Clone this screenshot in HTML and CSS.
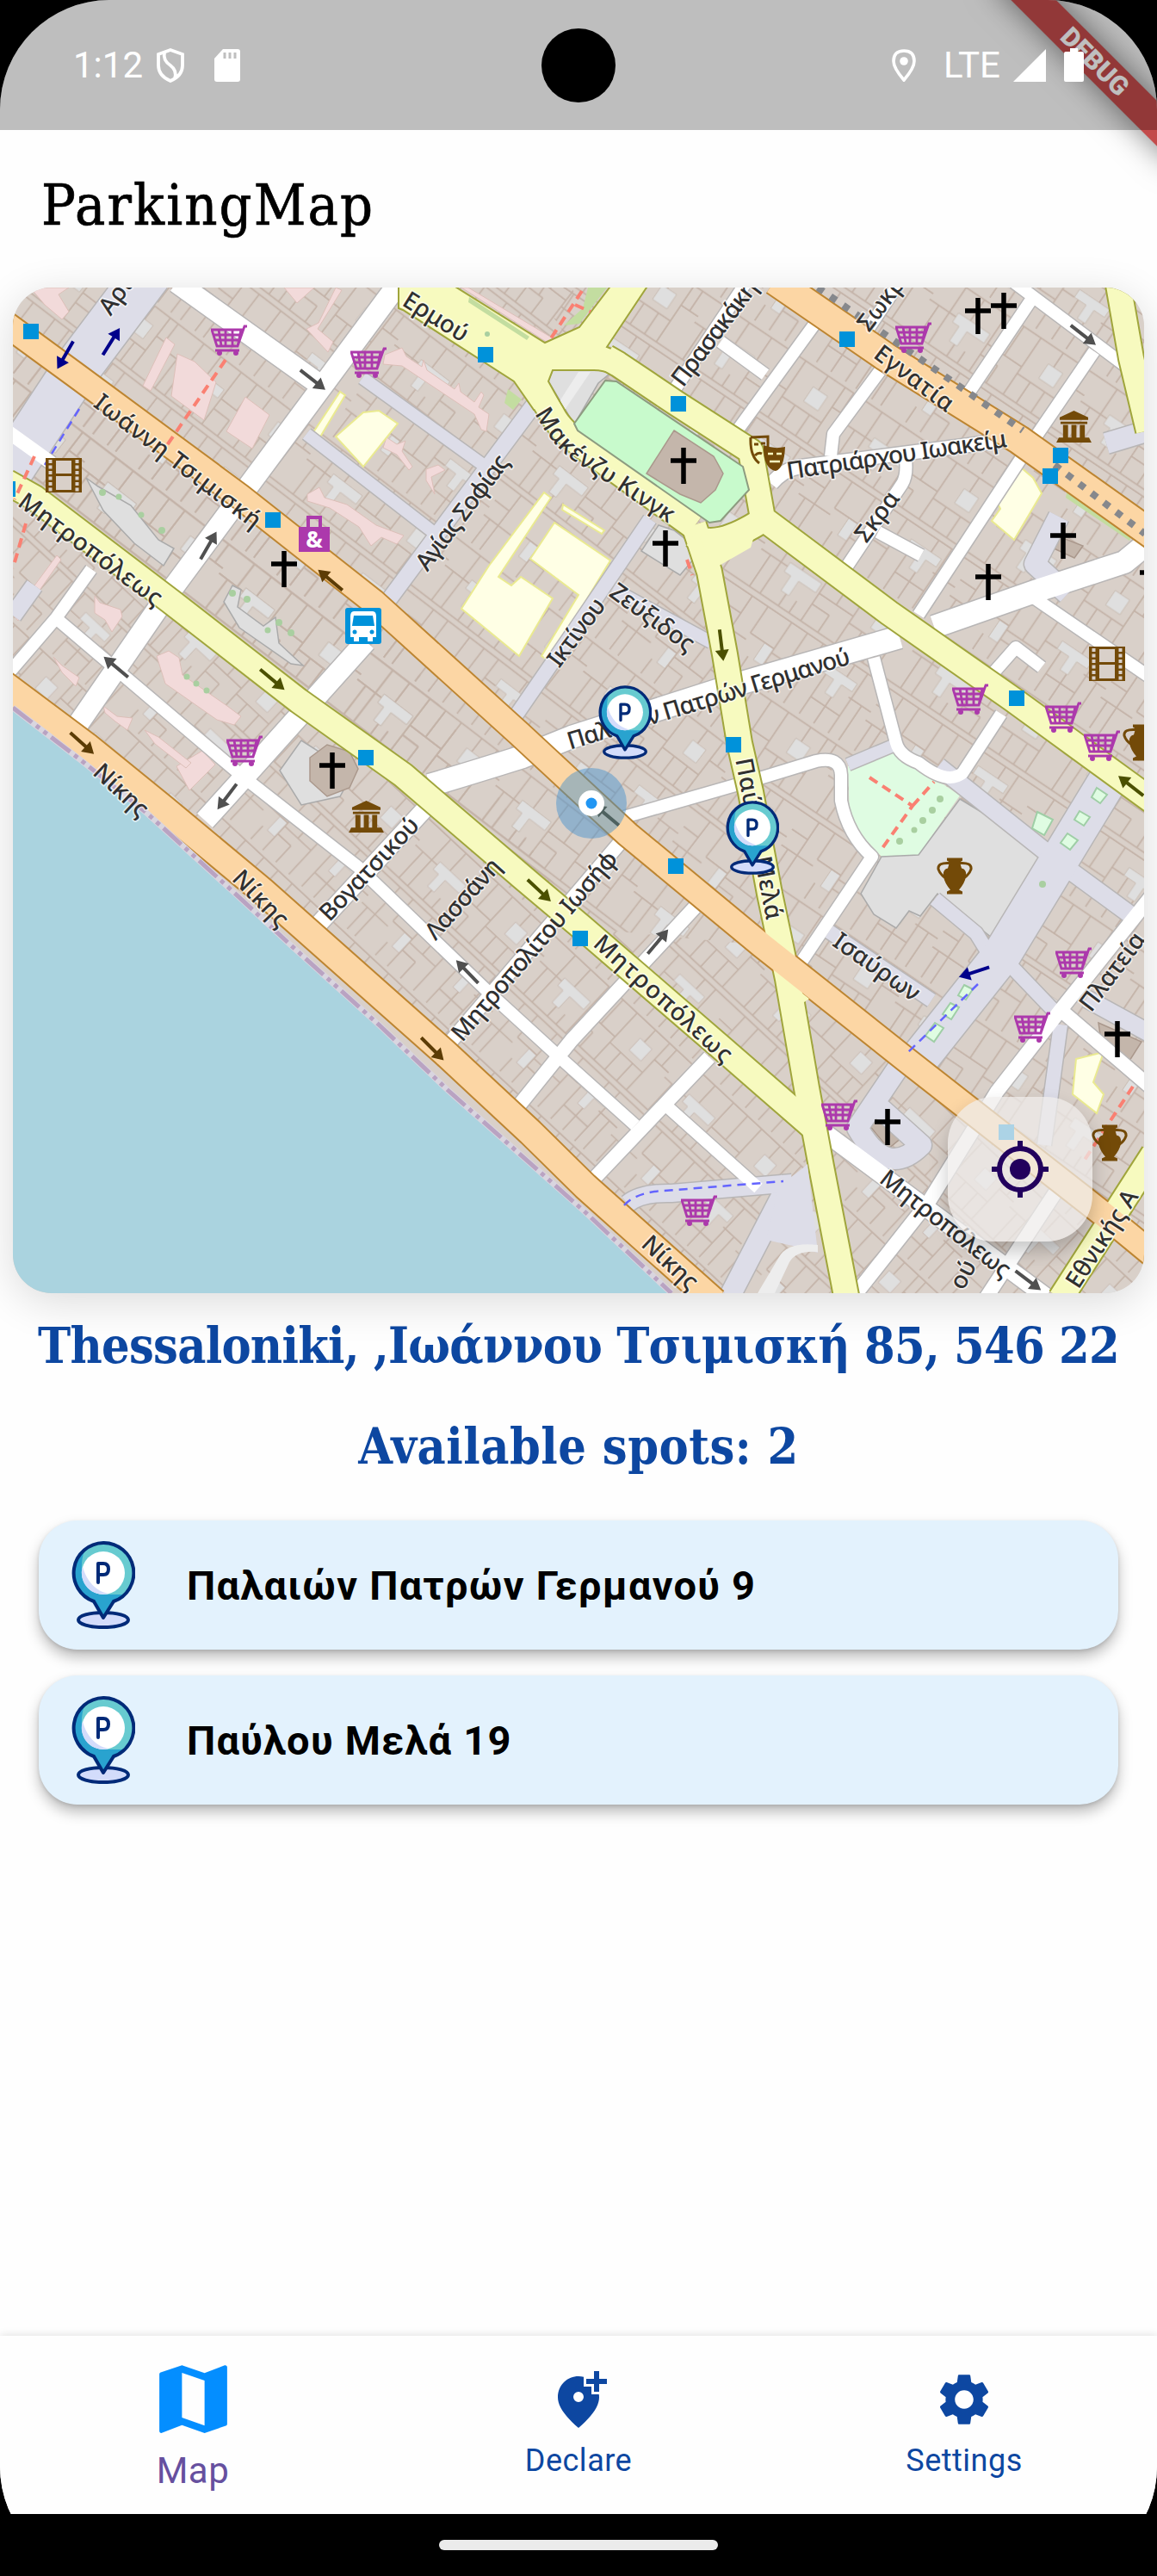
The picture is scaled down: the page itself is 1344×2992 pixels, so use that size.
FILE: index.html
```html
<!DOCTYPE html>
<html lang="el">
<head>
<meta charset="utf-8">
<title>ParkingMap</title>
<link rel="stylesheet" href="styles.css">
</head>
<body>
<svg class="sprite" aria-hidden="true">
  <symbol id="pin" viewBox="0 0 74 102">
    <ellipse cx="37" cy="91.5" rx="29" ry="8.6" fill="#d3dcfb" stroke="#002a78" stroke-width="4"/>
    <path d="M37 2a35 35 0 0 0-11 68l11 19 12-19A35 35 0 0 0 37 2z" fill="#67cbd0"/>
    <path d="M15 11C-7 34 1 61 26 70l11 19 12-19q8-3 13-8H37C12 57 8 32 15 11z" fill="#29a3cf"/>
    <circle cx="37" cy="37" r="25" fill="#fff"/>
    <path d="M13 29a25 25 0 0 0 30 32C28 58 17 46 13 29z" fill="#d3dcfb"/>
    <path d="M37 2a35 35 0 0 0-11 68l11 19 12-19A35 35 0 0 0 37 2z" fill="none" stroke="#002a78" stroke-width="4" stroke-linejoin="round"/>
    <path d="M31 48V26h6q6 0 6 6.500t-6 6.500h-6" fill="none" stroke="#002a78" stroke-width="4" stroke-linecap="round" stroke-linejoin="round"/>
  </symbol>
</svg>
<div class="screen">
  <div class="debug-banner">DEBUG</div>
  <div class="status">
    <span class="clock">1:12</span>
    <svg class="shield" viewBox="0 0 34 42"><path d="M17 3 31 8v13q0 12-14 18Q3 33 3 21V8zM10 6q-2 9 7 15 8 6 5 15" fill="none" stroke="#fff" stroke-width="3.800"/></svg>
    <svg class="sd" viewBox="0 0 30 38"><path d="M10 0h17q3 0 3 3v32q0 3-3 3H3q-3 0-3-3V11z" fill="#fff"/><path d="M12 4v7m6-7v7m6-7v7" stroke="#bfbfbf" stroke-width="3"/></svg>
    <span class="camera"></span>
    <svg class="loc" viewBox="0 0 28 38"><path d="M14 2q12 0 12 12 0 8-12 22Q2 22 2 14 2 2 14 2z" fill="none" stroke="#fff" stroke-width="3.600"/><circle cx="14" cy="14" r="4.800" fill="#fff"/></svg>
    <span class="lte">LTE</span>
    <svg class="signal" viewBox="0 0 38 38"><path d="M38 0v38H0z" fill="#fff"/></svg>
    <svg class="battery" viewBox="0 0 23 39"><path d="M7 0h9v4h5q2 0 2 2v31q0 2-2 2H2q-2 0-2-2V6q0-2 2-2h5z" fill="#fff"/></svg>
  </div>
  <header class="app-bar"><h1 class="slab">ParkingMap</h1></header>
  <section class="map">
  <svg class="map-canvas" viewBox="15 334 1314 1168">
    <defs>
      <g id="plots">
        <path class="court" d="M40 38h48v14H62v22H50V52H40zM150 118h46v12h-16v20h-12v-20h-18zM170 28h22v22h-22zM70 140h14v26H70z"/>
        <path class="plot" d="M0 6H230M0 92H230M0 100H230M30 6V92M58 6V38M92 6V92M118 6V50M144 6V92M178 6V28M204 6V92M0 44H40M92 50H144M144 60H204M204 36H230M58 74V92M74 74V92M118 66V92M92 66H118M164 60V92M186 60V92M14 44V92M217 6V36M24 100V190M48 100V140M84 100V190M108 100V146M132 100V190M156 130V190M200 100V190M0 150H48M48 140H84M84 146H132M132 130H150M196 138H230M178 150V190M62 166V190M108 160V190M84 160H108M180 100V118M216 138V190M0 126H24M156 164H200M10 150V190"/>
      </g>
      <pattern id="blocksWest" width="230" height="190" patternUnits="userSpaceOnUse" patternTransform="rotate(37.500) scale(.88)"><use href="#plots"/></pattern>
      <pattern id="blocksEast" width="230" height="190" patternUnits="userSpaceOnUse" patternTransform="translate(30 12) rotate(34) scale(.92)"><use href="#plots"/></pattern>
      <pattern id="blocksSouth" width="230" height="190" patternUnits="userSpaceOnUse" patternTransform="translate(8 40) rotate(43) scale(.86)"><use href="#plots"/></pattern>

      <g id="paved">
        <path class="w54" d="M172 318 87 431 2 560"/>
        <path class="w18" d="M624 465 507 622 447 703"/>
        <path class="w14" d="M421 439 564 542M356 504 503 618M712 684 826 746M985 888 1040 865"/>
        <path class="w16" d="M755 603 664 737 598 833M963 1082 1082 1162M1163 1110 1230 1180M1232 1190 1213 1330M1086 1044 1134 1084 1150 1110"/>
        <path class="w20" d="M1090 890 1232 1003 1318 1066M1335 1200 1262 1160"/>
        <path class="w44" d="M1292 898 1163 1110 1066 1232"/>
        <path class="w24" d="M1050 1230 996 1310Q1030 1370 1070 1330L1020 1285M918 1370 848 1505M1335 500 1285 515M1230 600 1202 655 1240 690"/>
        <path class="w20" d="M729 1398Q745 1385 780 1386L920 1374M15 715 40 680"/>
      </g>
      <g id="streets">
        <path class="w24" d="M205 328 373 448M466 325 277 580 186 703 90 842M425 745 295 890 238 953"/>
        <path class="w16" d="M10 502 60 538M720 979 520 1214M807 1054 664 1208 598 1290M824 1228 690 1369"/>
        <path class="w14" d="M106 661 65 718 10 782M65 718 282 902 416 1007 568 1153 650 1228 738 1307"/>
        <path class="w26" d="M499 912Q540 900 607 879L664 856 855 795 1045 740M1085 728 1202 687 1306 653 1340 625"/>
        <path class="w14" d="M725 949 889 902 948 884Q976 878 977 900V930Q985 970 1013 995L925 1126"/>
        <path class="w14" d="M1015 764 1041 863Q1045 878 1067 886 1100 912 1118 898L1163 829M1150 786 1180 752 1210 775M1202 695 1335 786"/>
        <path class="w14" d="M1067 714 1189 528 1271 408M1198 348 1118 467M1178 328 1306 424M948 374 855 502M837 397 889 435M872 320 780 458M1050 320 1000 395M1022 431 968 504 965 530"/>
        <path class="w16" d="M896 562Q910 545 930 542L1180 510"/>
        <path class="w14" d="M1052 534Q1054 552 1048 562L981 662M1020 618 1070 645M777 1287 881 1380"/>
        <path class="w20" d="M495 938 364 1080M960 1317 1215 1506"/>
        <path class="w16" d="M1338 1040 1232 1173 1158 1268 1080 1394 990 1508M1232 1173 1338 1264M1232 1376 1145 1508"/>
      </g>
      <g id="yellow">
        <path class="w28" d="M8 560 40 578 199 699 347 814 468 900 607 1019 677 1078 837 1216 945 1310"/>
        <path class="w28" d="M806 610 824 664 842 760 859 863 872 920 894 1038 915 1137 937 1264 954 1355 984 1510"/>
        <path class="w28" d="M704 415 718 423 785 468 872 524 886 602 1033 712 1176 812 1338 930"/>
        <path class="w28" d="M622 450 642 482Q652 502 690 528L806 612M806 622Q830 640 886 604"/>
        <path class="w28" d="M1298 325 1314 416 1334 500M1340 1340 1232 1508"/>
      </g>
      <g id="orange">
        <path class="w28" d="M5 375 87 435 278 576 434 699 603 852 729 969 885 1098 1054 1232 1284 1412 1340 1458"/>
        <path class="w30" d="M5 795 100 866 191 940 304 1034 516 1222 616 1315 680 1378 830 1512"/>
        <path class="w32" d="M900 326 1028 414 1184 511 1340 622"/>
      </g>
      <symbol id="stop" viewBox="0 0 18 18"><path d="M0 0h18v18H0z" fill="#0092da"/></symbol>
      <symbol id="cart" viewBox="0 0 42 36"><path d="M1 6h34L31 25H7zM3 12h30M5 18h28M9 6l3 18M17 6v18M25 6v18M31 25l8-23h3M5 30h28" fill="none" stroke="#ac39ac" stroke-width="2.800"/><circle cx="10" cy="33" r="3" fill="#ac39ac"/><circle cx="29" cy="33" r="3" fill="#ac39ac"/></symbol>
      <symbol id="cross" viewBox="0 0 30 42"><path d="M15 0v42M0 15h30" stroke="#000" stroke-width="5.500"/></symbol>
      <symbol id="film" viewBox="0 0 42 40"><path d="M0 0h42v40H0z" fill="#734a08"/><path d="M12 3h18v15H12zM12 21h18v16H12z" fill="#d9d0c9"/><path d="M5.500 2v38M36.500 2v38" stroke="#d9d0c9" stroke-width="4" stroke-dasharray="4 2.500"/></symbol>
      <symbol id="museum" viewBox="0 0 42 38"><path d="M21 0 38 8v3H4V8zM5 13h32v3H5zM8 17h6v15H8zM18 17h6v15h-6zM28 17h6v15h-6zM3 32h36l3 6H0z" fill="#734a08"/></symbol>
      <symbol id="vase" viewBox="0 0 42 42"><path d="M12 0h18v3l-3 2 2 7q6 1 5 9-1 8-8 16l4 2v3H12v-3l4-2q-7-8-8-16-1-8 5-9l2-7-3-2z" fill="#734a08"/><path d="M15 6Q1 5 2 13q2 6 8 10M27 6q14-1 13 7-2 6-8 10" fill="none" stroke="#734a08" stroke-width="3"/></symbol>
      <path id="arrow" d="M-18-2H6v-6L19 0 6 8V2h-24z" fill="currentColor"/>
    </defs>

    <path class="land" d="M15 334H1329V1502H15z"/>
    <path fill="url(#blocksWest)" d="M15 334H664L811 620 872 920 885 1098 434 699 677 1078 15 560z"/>
    <path fill="url(#blocksWest)" d="M15 560 677 1078 885 1098 434 699 15 380z"/>
    <path fill="url(#blocksEast)" d="M620 334H1329V1460L885 1098 872 920 811 620z"/>
    <path fill="url(#blocksSouth)" d="M15 560 677 1078 885 1098 1329 1460V1502H800L15 790z"/>

    <g class="pink">
      <path d="M35 334h45l-12 8 12 20-8 9-20-17zM285 461l28 21-20 39-30-20zM206 411l20 9 25 24-14 44-38-28zM330 334h35l-20 18zM193 392l10 8-28 54-9-6zM370 375l20-41 7 3-28 45 18 15-6 12-25-27zM66 645l5 5-50 71-6-7zM205 890l30-18 15 16-30 30zM182 762l14-6 12 8 4 20 52 36 16 12-8 10-20-6-60-42z"/>
      <path d="M447 412l20-8 5 10 18 12 2-8 4 12 32 22 5-7 2 10 16 12 8-12 3 4-6 14 12 8-3 20-6-2-8-18-84-56-22-2zM449 508l12 8 10-4-4 12 12 18-4 4-14-18-16-8zM495 545l14-5 8 6-16 8 4 20-10-16zM357 574l14-8 6 12 26 8 34 24 32 12-8 10-18-8-12 10-14-22-34-22-26-8zM110 692l6 8 24 8 2 8-12 18-8-14-12-8zM62 763l10 10 20 14-4 10-16-16zM120 820l16 12 18 2-6 14-14-10-12-10zM168 848l16 8 38 30-6 6-36-28z"/>
      <path d="M536 334h8l100 60-8 4z"/>
    </g>
    <g class="school">
      <path d="M390 507l32-28 18-2 22 15-40 50zM362 505l33-50 6 4-30 50z"/>
      <path d="M632 572l8 6-61 92 15 10 11-10 37 25-39 67-67-55 32-50z"/>
      <path d="M644 607 616 649 672 691 629 762 638 768 709 651zM654 586l48 30-3 4-46-28zM1186 543l14 12 10 18-32 54-26-22 10-14-8-16zM1250 1230l32-8-12 35 12 14-8 22-28-22z"/>
    </g>
    <g class="park">
      <path class="pale" d="M985 890 1037 871 1115 924 1067 993 1024 995 987 955z"/>
      <path class="strip" d="M112 377l12 7-19 30-10-6zM55 464l8 8-27 36-5-4zM590 452l16 12-10 12-10-8zM1180 520l-14-9 30 2 80 56-4 8zM1240 568l76 52-4 8-74-50zM1330 1430l-30-22 6 24z"/>
    </g>
    <path class="plaza" d="M1115 928 1232 999 1163 1098 1089 1038 1069 1064 1056 1058 1041 1078 1015 1062 1000 1038 1024 995 1067 993zM745 640 765 610 783 616 801 630 805 650 790 668zM325 895 350 860 410 898 395 925 350 935z"/>
    <path class="plaza" d="M270 680l10 5-4 20 30 22 14-10 4 30 28 26-14-2-60-42-18-30zM100 555l14 10 38 22 32 40 18 10-12 20-34-26-36-38zM642 430H713L695 445 667 493 637 443z"/>
    <path class="church" d="M360 880l20-15 26 8 10 20-10 22-26 10-20-18zM1004 1300 1022 1282 1064 1308 1032 1334zM1222 620l36 14-10 14-26-12zM1276 1188 1326 1210 1312 1232 1280 1215z"/>

    <use class="casing" href="#paved"/>
    <use class="casing" href="#streets"/>
    <use class="fill-paved" href="#paved"/>
    <use class="fill-white" href="#streets"/>
    <path class="plaza-light" d="M672 432h14l-30 44-6-10z"/>
    <use class="casing-yellow" href="#yellow"/>
    <use class="casing-orange" href="#orange"/>
    <path class="junction outlined" d="M463 325V358L468 360 597 443 620 476 655 475 637 443 642 430H690Q700 430 713 435L723 410 705 403 757 325H714L708 334 673 380 633 398 516 325z"/>
    <use class="fill-yellow" href="#yellow"/>
    <path class="junction" d="M893 1075 905 1090 908 1112 888 1098zM917 1142 940 1160 925 1170zM922 1280 945 1280 940 1320 920 1300zM812 624 884 596 872 636 830 660z"/>
    <use class="fill-orange" href="#orange"/>
    <path class="fill-paved-area" d="M931 1358 938 1352 946 1420 950 1455 925 1448 890 1440 905 1378z"/>
    <g class="park">
      <path d="M703 442 716 443 863 542 870 569 837 605 824 607 671 500 667 492z"/>
      <path class="strip" d="M545 345l70 46-3 4-68-44zM655 378l22-20 6-24h22l-32 42z"/>
    </g>
    <path class="church" d="M783 500 829 530 840 550 831 569 814 584 790 574 751 550z"/>
    <path class="plaza-light" d="M905 1460q10-18 45-14v8q-25-2-33 12l-17 36h-20z"/>

    <g class="green-dots"><circle cx="119" cy="572" r="4"/><circle cx="138" cy="577" r="3.500"/><circle cx="164" cy="598" r="3.500"/><circle cx="188" cy="616" r="4"/><circle cx="270" cy="689" r="4"/><circle cx="287" cy="696" r="4"/><circle cx="324" cy="723" r="4"/><circle cx="311" cy="732" r="3.500"/><circle cx="338" cy="735" r="4"/><circle cx="217" cy="786" r="3.500"/><circle cx="228" cy="794" r="3.500"/><circle cx="240" cy="802" r="3.500"/><circle cx="566" cy="388" r="3"/><circle cx="1092" cy="928" r="4"/><circle cx="1083" cy="941" r="4"/><circle cx="1072" cy="953" r="4"/><circle cx="1062" cy="964" r="3.500"/><circle cx="1045" cy="977" r="4"/><circle cx="1211" cy="1027" r="4"/></g>
    <path class="planter" d="M1205 943l18 9-10 18-14-8zM1274 915l12 8-8 10-10-7zM1254 942l12 7-7 10-11-7zM1240 968l12 8-9 11-11-8zM1120 1144l10 5-8 12-9-5zM1104 1165l10 5-9 14-10-6zM1086 1188l10 6-11 16-10-7z"/>
    <path class="footway" d="M262 418 192 520M676 338 638 396M1010 903 1060 936 1025 985M1060 936 1085 908M40 530 17 580M30 608 15 660M668 354 686 362M798 650 804 668M1316 1262 1258 1350"/>
    <path class="cycleway" d="M92 475 52 540M1136 1143 1055 1222M725 1400Q735 1388 760 1384L910 1372"/>
    <path class="rail" d="M950 334 1188 500M1225 540 1330 620"/>

    <path class="sea" d="M15 822 94 883 169 943 269 1034 338 1098 442 1192 520 1266 680 1408 780 1502H15z"/>
    <path class="quay" d="M15 822 94 883 169 943 269 1034 338 1098 442 1192 520 1266 680 1408 780 1502"/>
    <path class="quay-dash" d="M15 822 94 883 169 943 269 1034 338 1098 442 1192 520 1266 680 1408 780 1502"/>

    <g class="arrows">
      <use href="#arrow" transform="translate(363 441) rotate(38)"/><use href="#arrow" transform="translate(242 634) rotate(-60)"/>
      <use href="#arrow" transform="translate(135 775) rotate(220)"/><use href="#arrow" transform="translate(1258 389) rotate(38)"/>
      <use href="#arrow" transform="translate(264 925) rotate(127)"/><use href="#arrow" transform="translate(543 1129) rotate(226)"/>
      <use href="#arrow" transform="translate(764 1094) rotate(-50)"/><use href="#arrow" transform="translate(1194 1487) rotate(37)"/>
      <g class="arrows-brown"><use href="#arrow" transform="translate(384 674) rotate(220)"/><use href="#arrow" transform="translate(95 863) rotate(42)"/><use href="#arrow" transform="translate(502 1218) rotate(45)"/><use href="#arrow" transform="translate(705 947) rotate(220)"/></g>
      <g class="arrows-olive"><use href="#arrow" transform="translate(316 789) rotate(40)"/><use href="#arrow" transform="translate(838 749) rotate(83)"/><use href="#arrow" transform="translate(1314 913) rotate(218)"/><use href="#arrow" transform="translate(626 1034) rotate(43)"/></g>
      <g class="arrows-navy"><use href="#arrow" transform="translate(76 412) rotate(120)"/><use href="#arrow" transform="translate(129 397) rotate(-58)"/><use href="#arrow" transform="translate(1132 1129) rotate(162)"/></g>
    </g>

    <g class="labels">
      <text transform="translate(122 363) rotate(-54)" dy="8">Αρι</text>
      <text transform="translate(112 465) rotate(37.500)" dy="8" textLength="236">Ιωάννη Τσιμισκή</text>
      <text transform="translate(24 580) rotate(36.400)" dy="8" textLength="200">Μητροπόλεως</text>
      <text transform="translate(470 347) rotate(32)" dy="8" textLength="84">Ερμού</text>
      <text transform="translate(490 660) rotate(-53)" dy="8" textLength="160">Αγίας Σοφίας</text>
      <path id="makenzi" d="M628 476Q648 514 676 532L788 606" fill="none" stroke="none"/>
      <text dy="8"><textPath href="#makenzi" textLength="200">Μακένζυ Κινγκ</textPath></text>
      <text transform="translate(643 772) rotate(-53)" dy="8" textLength="92">Ικτίνου</text>
      <text transform="translate(711 685) rotate(36)" dy="8" textLength="114">Ζεύξιδος</text>
      <text transform="translate(787 446) rotate(-53)" dy="8" textLength="146">Πρασακάκη</text>
      <text transform="translate(1003 382) rotate(-53)" dy="8">Σωκρ</text>
      <text transform="translate(1018 408) rotate(37)" dy="8" textLength="108">Εγνατία</text>
      <text transform="translate(914 549) rotate(-8.500)" dy="8" textLength="258">Πατριάρχου Ιωακείμ</text>
      <text transform="translate(1000 627) rotate(-53)" dy="8" textLength="66">Σκρα</text>
      <text transform="translate(660 863) rotate(-17)" dy="8" textLength="342">Παλαιών Πατρών Γερμανού</text>
      <text transform="translate(862 881) rotate(79)" dy="8" textLength="190">Παύλου Μελά</text>
      <text transform="translate(112 893) rotate(43)" dy="8" textLength="76">Νίκης</text>
      <text transform="translate(274 1016) rotate(46)" dy="8" textLength="80">Νίκης</text>
      <text transform="translate(749 1441) rotate(43)" dy="8" textLength="78">Νίκης</text>
      <text transform="translate(377 1066) rotate(-46.500)" dy="8" textLength="154">Βογατσικού</text>
      <text transform="translate(500 1088) rotate(-48)" dy="8" textLength="116">Λασσάνη</text>
      <text transform="translate(531 1206) rotate(-49.500)" dy="8" textLength="280">Μητροπολίτου Ιωσήφ</text>
      <text transform="translate(693 1092) rotate(42)" dy="8" textLength="206">Μητροπόλεως</text>
      <text transform="translate(970 1091) rotate(35)" dy="8" textLength="116">Ισαύρων</text>
      <text transform="translate(1025 1366) rotate(38)" dy="8" textLength="184">Μητροπόλεως</text>
      <text transform="translate(1261 1172) rotate(-53)" dy="8">Πλατεία</text>
      <text transform="translate(1246 1494) rotate(-57)" dy="8">Εθνικής Α</text>
      <text transform="translate(1112 1496) rotate(-62)" dy="8">ού</text>
    </g>

    <g class="pois">
      <use href="#stop" x="27" y="376" width="18" height="18"/><use href="#stop" x="555" y="403" width="18" height="18"/><use href="#stop" x="308" y="595" width="18" height="18"/><use href="#stop" x="416" y="871" width="18" height="18"/><use href="#stop" x="0" y="559" width="18" height="18"/><use href="#stop" x="779" y="460" width="18" height="18"/><use href="#stop" x="975" y="385" width="18" height="18"/><use href="#stop" x="1223" y="520" width="18" height="18"/><use href="#stop" x="1211" y="544" width="18" height="18"/><use href="#stop" x="1172" y="802" width="18" height="18"/><use href="#stop" x="843" y="856" width="18" height="18"/><use href="#stop" x="665" y="1081" width="18" height="18"/><use href="#stop" x="776" y="997" width="18" height="18"/><use href="#stop" x="1160" y="1306" width="18" height="18"/>
      <use href="#cart" x="245" y="377" width="42" height="36"/><use href="#cart" x="407" y="403" width="42" height="36"/><use href="#cart" x="263" y="854" width="42" height="36"/><use href="#cart" x="1040" y="374" width="42" height="36"/><use href="#cart" x="1106" y="794" width="42" height="36"/><use href="#cart" x="1214" y="815" width="42" height="36"/><use href="#cart" x="1259" y="848" width="42" height="36"/><use href="#cart" x="1226" y="1100" width="42" height="36"/><use href="#cart" x="1178" y="1175" width="42" height="36"/><use href="#cart" x="954" y="1277" width="42" height="36"/><use href="#cart" x="791" y="1388" width="42" height="36"/>
      <use href="#cross" x="315" y="640" width="30" height="42"/><use href="#cross" x="371" y="874" width="30" height="42"/><use href="#cross" x="1121" y="346" width="30" height="42"/><use href="#cross" x="1151" y="340" width="30" height="42"/><use href="#cross" x="779" y="520" width="30" height="42"/><use href="#cross" x="758" y="616" width="30" height="42"/><use href="#cross" x="1220" y="607" width="30" height="42"/><use href="#cross" x="1133" y="655" width="30" height="42"/><use href="#cross" x="1324" y="650" width="30" height="42"/><use href="#cross" x="1016" y="1288" width="30" height="42"/><use href="#cross" x="1283" y="1186" width="30" height="42"/>
      <use href="#film" x="53" y="532" width="42" height="40"/><use href="#film" x="1265" y="751" width="42" height="40"/>
      <use href="#museum" x="405" y="930" width="41" height="37"/><use href="#museum" x="1227" y="477" width="41" height="37"/>
      <use href="#vase" x="1088" y="996" width="42" height="43"/><use href="#vase" x="1304" y="841" width="42" height="43"/><use href="#vase" x="1268" y="1306" width="42" height="43"/>
      <g transform="translate(401 706)"><rect width="42" height="42" rx="3" fill="#0092da"/><path d="M10 4h22q4 0 4 6v24h-4v5h-6v-5H16v5h-6v-5H6V10q0-6 4-6z" fill="#fff"/><path d="M10 9h22l2 12H8z" fill="#0092da"/><circle cx="11" cy="28" r="2.500" fill="#0092da"/><circle cx="31" cy="28" r="2.500" fill="#0092da"/></g>
      <g transform="translate(347 599)"><path d="M0 13h36v29H0z" fill="#ac39ac"/><path d="M11 14V2h14v12" fill="none" stroke="#ac39ac" stroke-width="4"/><text x="18" y="37" class="bag-mark">&amp;</text></g>
      <g transform="translate(870 505)"><path d="M2 3 22 2v12M2 3q-1 22 10 30M6 11h5M14 10h5M7 24q4-4 8-2" fill="none" stroke="#734a08" stroke-width="3"/><path d="M17 12q12 5 25 2-1 25-11 28-15-3-14-30z" fill="#734a08"/><path d="M22 22h6M32 22h6M24 31h12" stroke="#f7fabf" stroke-width="2.500"/></g>
    </g>

    <circle cx="687" cy="933" r="41" fill="#3f8fcf" fill-opacity=".45"/>
    <circle cx="687" cy="933" r="15" fill="#fff"/><circle cx="687" cy="933" r="6.500" fill="#2196f3"/>
    <use href="#pin" x="695" y="796" width="62" height="86"/>
    <use href="#pin" x="843" y="930" width="62" height="86"/>
  </svg>
    <button class="locate" aria-label="Locate"><svg viewBox="0 0 24 24"><path fill="#22005d" d="M12 8a4 4 0 1 0 0 8 4 4 0 0 0 0-8zm8.940 3A8.990 8.990 0 0 0 13 3.060V1h-2v2.060A8.990 8.990 0 0 0 3.060 11H1v2h2.060A8.990 8.990 0 0 0 11 20.940V23h2v-2.060A8.990 8.990 0 0 0 20.940 13H23v-2zM12 19a7 7 0 1 1 0-14 7 7 0 0 1 0 14z"/></svg></button>
  </section>
  <p class="slab address">Thessaloniki, ,Ιωάννου Τσιμισκή 85, 546 22</p>
  <h2 class="slab spots-title">Available spots: 2</h2>
  <ul class="spots">
    <li class="spot"><svg class="spot-pin"><use href="#pin"/></svg><span>Παλαιών Πατρών Γερμανού 9</span></li>
    <li class="spot"><svg class="spot-pin"><use href="#pin"/></svg><span>Παύλου Μελά 19</span></li>
  </ul>
  <nav class="tabs">
    <a class="tab active"><svg viewBox="0 0 24 24"><path fill="currentColor" d="M20.500 3l-.16.030L15 5.100 9 3 3.360 4.900c-.21.070-.36.250-.36.480V20.500c0 .28.220.5.500.5l.16-.03L9 18.900l6 2.100 5.640-1.900c.21-.07.360-.25.360-.48V3.500c0-.28-.22-.5-.5-.5zM15 19l-6-2.110V5l6 2.110V19z"/></svg><span>Map</span></a>
    <a class="tab"><svg viewBox="0 0 24 24"><path fill="currentColor" fill-rule="evenodd" d="M20 1v3h3v2h-3v3h-2V6h-3V4h3V1zM14 3.260V7h3v3h2.920q.08.600.080 1.200c0 3.320-2.670 7.250-8 11.800-5.330-4.550-8-8.480-8-11.800C4 6.220 7.800 3 12 3q1 0 2 .26zM12 9a2 2 0 1 0 0 4 2 2 0 0 0 0-4z"/></svg><span>Declare</span></a>
    <a class="tab"><svg viewBox="0 0 24 24"><path fill="currentColor" d="M19.140 12.940c.04-.3.060-.61.060-.94 0-.32-.02-.64-.07-.94l2.030-1.580c.18-.14.230-.41.120-.61l-1.920-3.320c-.12-.22-.37-.29-.59-.22l-2.390.96c-.5-.38-1.030-.7-1.620-.94l-.36-2.540c-.04-.24-.24-.41-.48-.41h-3.840c-.24 0-.43.170-.47.410l-.36 2.540c-.59.240-1.130.570-1.620.94l-2.390-.96c-.22-.08-.47 0-.59.220L2.740 8.870c-.12.210-.08.470.120.610l2.030 1.580c-.05.300-.09.630-.09.940s.02.640.070.940l-2.030 1.580c-.18.140-.23.410-.12.610l1.920 3.320c.12.220.370.290.590.220l2.390-.96c.5.380 1.030.7 1.620.94l.36 2.540c.05.240.240.410.480.410h3.840c.24 0 .44-.17.470-.41l.36-2.540c.59-.24 1.130-.56 1.620-.94l2.390.96c.22.080.470 0 .59-.22l1.920-3.320c.12-.22.070-.47-.12-.61l-2.010-1.580zM12 15.600c-1.980 0-3.600-1.620-3.600-3.600s1.620-3.600 3.600-3.600 3.600 1.620 3.600 3.600-1.620 3.600-3.600 3.600z"/></svg><span>Settings</span></a>
  </nav>
  <div class="gesture"><span></span></div>
</div>
</body>
</html>
```
FILE: styles.css
```css
* { box-sizing: border-box; margin: 0; padding: 0; }
body { width: 1344px; height: 2992px; background: #000; font-family: Roboto, "Noto Sans", sans-serif; }
.sprite { position: absolute; width: 0; height: 0; }
.screen { position: relative; display: flex; flex-direction: column; width: 1344px; height: 2992px; overflow: hidden; border-radius: 127px; background: linear-gradient(#fefefe 2920px, #000 2920px); }
svg { display: block; flex: none; }

/* status bar */
.status { position: relative; flex: none; display: flex; align-items: center; height: 151px; padding-left: 85px; background: rgba(0,0,0,.25); color: #fff; font-size: 42px; line-height: 150px; }
.clock { width: 96px; }
.shield { width: 34px; height: 42px; }
.sd { width: 30px; height: 38px; margin-left: 34px; }
.camera { width: 86px; height: 86px; margin: 0 321px 0 350px; border-radius: 50%; background: #000; }
.loc { width: 28px; height: 38px; }
.lte { width: 81px; margin-left: 32px; }
.signal { width: 38px; height: 38px; }
.battery { width: 23px; height: 39px; margin-left: 21px; }
.debug-banner { position: absolute; left: 1122px; top: 53px; width: 300px; height: 37px; transform: rotate(45deg); background: rgba(176,18,18,.76); box-shadow: 0 0 36px rgba(0,0,0,.5); color: #fff; font-size: 30.5px; font-weight: 900; line-height: 37px; text-align: center; }

/* heading */
.slab { font-family: "Roboto Slab", "DejaVu Serif Condensed", "DejaVu Serif", serif; font-stretch: condensed; white-space: nowrap; }
.app-bar { flex: none; height: 183px; padding-left: 48px; }
.app-bar h1 { font-size: 66px; font-weight: 400; line-height: 175px; letter-spacing: 2.1px; color: #000; -webkit-text-stroke: .7px #000; }

/* map card */
.map { position: relative; flex: none; width: 1314px; height: 1168px; margin-left: 15px; border-radius: 45px; box-shadow: 0 10px 50px rgba(0,0,0,.14); }
.map-canvas { width: 1314px; height: 1168px; border-radius: 45px; overflow: hidden; background: #dfdfdf; }
.land { fill: #d9d0c9; }
.plot { fill: none; stroke: #c3b2a7; stroke-width: 1.9; }
.court { fill: #dfdfdf; stroke: #c9bcb3; stroke-width: 1; }
.pink path { fill: #f2dada; stroke: #dcbfb8; stroke-width: 1; }
.school path { fill: #ffffe5; stroke: #eaea90; stroke-width: 2; }
.park path { fill: #c8facc; stroke: #8d9b80; stroke-width: 2; }
.park .pale { fill: #dffce2; stroke: none; }
.park .strip { fill: #c3dda0; stroke: none; }
.plaza { fill: #dfdfdf; stroke: #aaa; stroke-width: 1.5; }
.plaza-light { fill: #ededed; }
.church { fill: #c4b6ab; stroke: #aa988c; stroke-width: 1.5; }
.planter { fill: #dffce2; stroke: #9fcea6; stroke-width: 2; }
.green-dots { fill: #a9cfa0; }
.footway { fill: none; stroke: #fa8072; stroke-width: 4; stroke-dasharray: 11 7; }
.cycleway { fill: none; stroke: #6464ff; stroke-width: 2.5; stroke-dasharray: 10 7; }
.rail { fill: none; stroke: #86888c; stroke-width: 8; stroke-dasharray: 8 10; }
.casing, .casing-yellow, .casing-orange, .fill-white, .fill-paved, .fill-yellow, .fill-orange { fill: none; stroke-linejoin: round; --case: 0px; }
.casing { stroke: #b8b6b6; --case: 3px; }
.casing-yellow { stroke: #a0a53c; --case: 4px; }
.casing-orange { stroke: #bd8531; --case: 4px; }
.fill-white { stroke: #fff; }
.fill-paved { stroke: #dddde8; }
.fill-paved-area { fill: #dddde8; }
.fill-yellow { stroke: #f7fabf; }
.fill-orange { stroke: #fcd6a4; }
.junction { fill: #f7fabf; }
.outlined { stroke: #a0a53c; stroke-width: 2; }
.w14 { stroke-width: calc(14px + var(--case)); }
.w16 { stroke-width: calc(16px + var(--case)); }
.w18 { stroke-width: calc(18px + var(--case)); }
.w20 { stroke-width: calc(20px + var(--case)); }
.w24 { stroke-width: calc(24px + var(--case)); }
.w26 { stroke-width: calc(26px + var(--case)); }
.w28 { stroke-width: calc(28px + var(--case)); }
.w30 { stroke-width: calc(30px + var(--case)); }
.w32 { stroke-width: calc(32px + var(--case)); }
.w44 { stroke-width: calc(44px + var(--case)); }
.w54 { stroke-width: calc(54px + var(--case)); }
.sea { fill: #aad3df; }
.quay { fill: none; stroke: #d9d5df; stroke-width: 7; }
.quay-dash { fill: none; stroke: #b9a3c2; stroke-width: 5; stroke-dasharray: 28 6 5 6 5 6; }
.arrows { color: #505050; }
.arrows-brown { color: #5c3c05; }
.arrows-olive { color: #4b5000; }
.arrows-navy { color: #00008b; }
.labels { font-family: "Noto Sans", sans-serif; font-size: 28px; font-weight: 500; fill: #303030; stroke: rgba(255,255,255,.6); stroke-width: 3.5px; stroke-linejoin: round; paint-order: stroke; }
.bag-mark { font: bold 26px "Noto Sans", sans-serif; fill: #fff; text-anchor: middle; }
.locate { position: absolute; right: 60px; bottom: 60px; display: grid; place-items: center; width: 168px; height: 168px; border: 0; border-radius: 54px; background: rgba(238,236,234,.72); box-shadow: 0 12px 22px rgba(0,0,0,.22); }
.locate svg { width: 72px; height: 72px; }

/* results */
.address, .spots-title { flex: none; align-self: center; color: #0d47a1; }
.address { height: 117px; font-size: 57px; font-weight: 700; line-height: 122px; letter-spacing: -.74px; }
.spots-title { height: 147px; font-size: 57px; font-weight: 700; line-height: 122px; letter-spacing: .5px; }
.spots { flex: 1; display: flex; flex-direction: column; gap: 30px; padding: 0 45px; list-style: none; }
.spot { flex: none; display: flex; align-items: center; gap: 60px; height: 150px; padding-left: 38px; border-radius: 45px; background: #e3f2fd; box-shadow: 0 9px 16px rgba(0,0,0,.26), 0 2px 4px rgba(0,0,0,.12); color: #000; font-size: 47px; font-weight: 700; letter-spacing: 1.25px; }
.spot-pin { width: 74px; height: 102px; }

/* bottom navigation */
.tabs { flex: none; display: flex; height: 207px; background: #fefefe; box-shadow: 0 0 10px rgba(0,0,0,.14); }
.tab { flex: 1; display: flex; flex-direction: column; align-items: center; padding-top: 38px; color: #0d47a1; font-size: 36px; line-height: 42px; letter-spacing: .5px; }
.tab svg { width: 72px; height: 72px; }
.tab span { margin-top: 14px; }
.tab.active { padding-top: 21px; color: #048eff; font-size: 42px; line-height: 50px; }
.tab.active svg { width: 105px; height: 105px; }
.tab.active span { margin-top: 6px; color: #66509f; }
.gesture { flex: none; display: flex; justify-content: center; height: 72px; padding-top: 30px; background: #000; }
.gesture span { width: 324px; height: 12px; border-radius: 6px; background: #ebebeb; }
```
